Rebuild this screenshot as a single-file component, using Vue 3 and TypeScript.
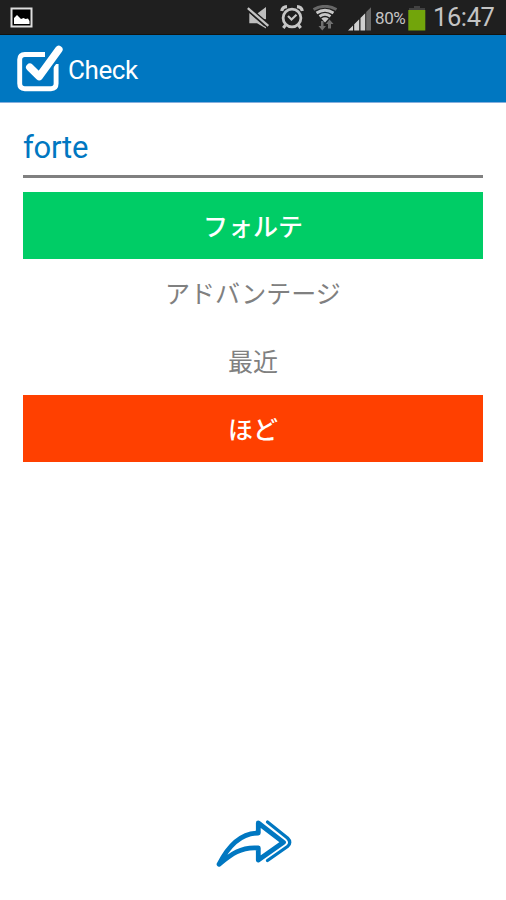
<script setup lang="ts">
interface Answer {
  text: string
  state: 'correct' | 'plain' | 'wrong'
}

const word = 'forte'
const answers: Answer[] = [
  { text: 'フォルテ', state: 'correct' },
  { text: 'アドバンテージ', state: 'plain' },
  { text: '最近', state: 'plain' },
  { text: 'ほど', state: 'wrong' },
]
</script>

<template>
  <div class="screen">
    <header class="status">
      <svg class="picture" width="24" height="22" viewBox="0 0 24 22">
        <rect x="1.500" y="1.500" width="20" height="18" fill="#000" stroke="#dedede" stroke-width="2" />
        <path d="M4 17V11L7 8L11 12L13.500 11L15.500 12L18 11.500L19.500 14V17Z" fill="#fff" />
      </svg>
      <div class="tray">
        <svg class="mute" width="24" height="24" viewBox="0 0 24 24">
          <path d="M10.300 7.500L19 1V13.200L16.500 13ZM2.300 7L17 20L19 20.800V22.500L10 17.300H2.300Z" fill="#bdbdbd" />
          <path d="M.800 2.200L21.300 19.800" stroke="#1f1f1f" stroke-width="4.800" />
          <path d="M.800 2.200L21.300 19.800" stroke="#c4c4c4" stroke-width="2.300" />
        </svg>
        <svg class="alarm" width="24" height="25" viewBox="0 0 24 25">
          <g fill="none" stroke="#c6c6c6">
            <circle cx="12" cy="13" r="8.900" stroke-width="2.800" />
            <path d="M1.700 6Q2.500 2 7 1.700M22.300 6Q21.500 2 17 1.700" stroke-width="3.200" />
            <path d="M5.500 20L3.300 23M18.500 20L20.700 23" stroke-width="3" />
            <path d="M8 11L11.500 14.500L16.500 9.800" stroke-width="2.200" />
          </g>
        </svg>
        <svg class="wifi" width="26" height="26" viewBox="0 0 26 26">
          <g fill="none" stroke-width="2.800">
            <path d="M1.500 4.500Q13-2 24.500 4.500" stroke="#686868" />
            <path d="M4.500 8Q13 2.500 21.500 8" stroke="#c8c8c8" />
            <path d="M7.500 11.300Q13 7.500 18.500 11.300" stroke="#c8c8c8" />
          </g>
          <path d="M9.300 13.500Q13 11 16.700 13.500L13 17.500Z" fill="#c8c8c8" />
          <path d="M9 16H11.500V21H14L10.300 25.500L6.500 21H9ZM16 23.500H19V19H21.500L17.500 14.500L14 19H16Z" fill="#707070" />
        </svg>
        <svg class="signal" width="24" height="24" viewBox="0 0 24 24">
          <path d="M0 23.500L5 18.500V23.500ZM6.200 17.300L11.200 12.300V23.500H6.200ZM12.500 11L17.200 6.300V23.500H12.500Z" fill="#d0d0d0" />
          <path d="M18.200 5L23 .300V23.500H18.200Z" fill="#686868" />
        </svg>
        <span class="percent">80%</span>
        <svg class="battery" width="18" height="26" viewBox="0 0 18 26">
          <path d="M6 1H12V3H17V6H1V3H6Z" fill="#424242" />
          <rect x="0.300" y="5" width="17" height="20.500" fill="#72a50b" />
        </svg>
        <time class="clock">16:47</time>
      </div>
    </header>

    <div class="bar">
      <svg class="logo" width="48" height="48" viewBox="0 0 48 48" fill="none" stroke="#fff">
        <path d="M29 9.500H8.800Q3.700 9.500 3.700 14.600V38.600Q3.700 43.700 8.800 43.700H35Q40.100 43.700 40.100 38.600V19" stroke-width="4.900" />
        <path d="M20 28L23.200 31L44.500 2" stroke="#0077c1" stroke-width="13" stroke-linejoin="round" />
        <path d="M13.800 22.300L23.200 31.500L42.800 4.500" stroke-width="7.600" stroke-linecap="round" stroke-linejoin="round" />
      </svg>
      <h1>Check</h1>
    </div>

    <main>
      <div class="word">{{ word }}</div>
      <div class="answers">
        <div v-for="answer in answers" :key="answer.text" class="answer" :class="answer.state">
          {{ answer.text }}
        </div>
      </div>
    </main>

    <footer>
      <svg width="78" height="50" viewBox="0 0 78 50" fill="none" stroke="#0077c1" stroke-linecap="round" stroke-linejoin="round">
        <path d="M3 45.300C13 25.500 26 14 42.300 14V4L67.500 23.300L42.300 41V29C25 27.500 15 35.500 3 45.300Z" stroke-width="4.800" />
        <path d="M51.500 3L71.500 19Q76 23.500 71.500 27.500L51.500 41.500" stroke-width="3.300" />
      </svg>
    </footer>
  </div>
</template>

<style>
body {
  margin: 0;
  background: #fff;
}
</style>

<style scoped>
.screen {
  display: flex;
  flex-direction: column;
  box-sizing: border-box;
  width: 506px;
  height: 900px;
  overflow: hidden;
  background: #fff;
  font-family: Roboto, "Noto Sans CJK JP", sans-serif;
}
.status {
  display: flex;
  justify-content: space-between;
  box-sizing: border-box;
  height: 35px;
  padding: 0 11px 0 10px;
  background: #1f1f1f;
  border-bottom: 1px solid #13130f;
}
.picture {
  margin-top: 7px;
}
.tray {
  display: flex;
  align-items: flex-start;
  color: #c4c4c4;
}
.mute {
  margin: 6px 9px 0 0;
}
.alarm {
  margin: 5px 8px 0 0;
}
.wifi {
  margin: 5px 10px 0 0;
}
.signal {
  margin: 7px 3px 0 0;
}
.percent {
  width: 33px;
  font-size: 17px;
  line-height: 36px;
  letter-spacing: -0.4px;
}
.battery {
  margin: 5px 7px 0 0;
}
.clock {
  width: 62px;
  font-size: 25.500px;
  line-height: 35px;
  letter-spacing: -0.400px;
}
.bar {
  display: flex;
  align-items: center;
  box-sizing: border-box;
  height: 68px;
  padding: 1px 0 0 16px;
  background: #0077c1;
  border-bottom: 1px solid #86afdd;
}
.bar h1 {
  margin: 2px 0 0 4px;
  color: #fff;
  font-size: 26px;
  font-weight: 400;
  line-height: 30px;
  letter-spacing: -0.400px;
}
main {
  flex: 1;
  padding: 18px 23px 0;
}
.word {
  height: 54px;
  border-bottom: 3px solid #808080;
  color: #0077c1;
  font-size: 31px;
  letter-spacing: -0.200px;
  line-height: 54px;
}
.answers {
  margin-top: 14px;
}
.answer {
  box-sizing: border-box;
  height: 68px;
  padding-top: 2px;
  color: #808080;
  font-size: 25px;
  line-height: 67px;
  text-align: center;
}
.correct {
  height: 67px;
  background: #00cd66;
  color: #fff;
  font-weight: 500;
}
.wrong {
  height: 67px;
  background: #ff4000;
  color: #fff;
  font-weight: 500;
}
footer {
  display: flex;
  height: 81px;
  padding-left: 216px;
}
</style>
